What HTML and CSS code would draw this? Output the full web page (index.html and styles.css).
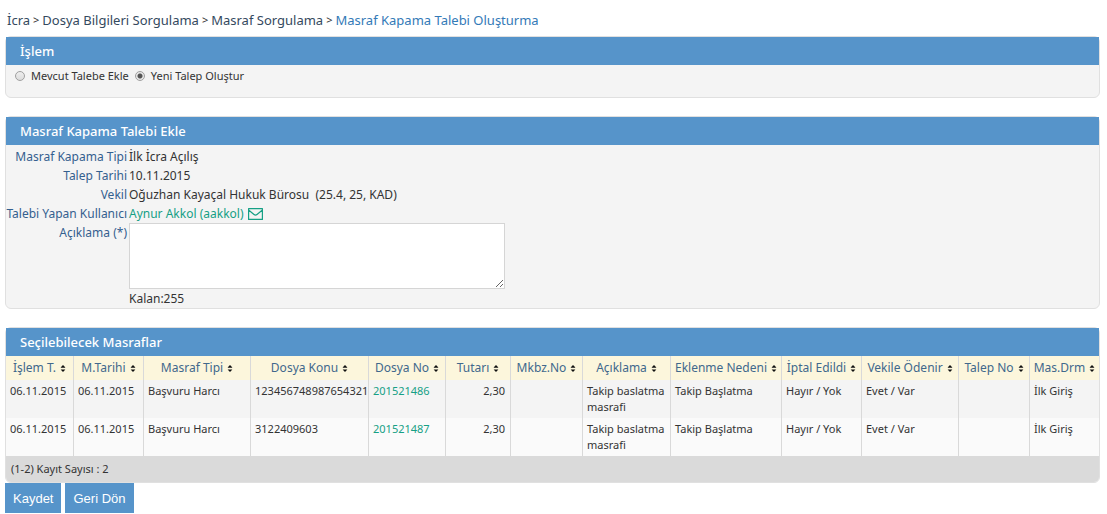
FILE: index.html
```html
<!DOCTYPE html>
<html lang="tr">
<head>
<meta charset="utf-8">
<title>Masraf Kapama Talebi Oluşturma</title>
<link rel="stylesheet" href="styles.css">
</head>
<body>
<svg class="symbols" aria-hidden="true">
  <symbol id="sort" viewBox="0 0 6 8"><path d="M3 0 5.500 2.500V3H.5v-.5zM.5 5h5v.5L3 8 .5 5.500z" fill="#111"/></symbol>
</svg>
<nav class="breadcrumb" aria-label="Konum">
  <a href="#">İcra</a><span>&gt;</span><a href="#">Dosya Bilgileri Sorgulama</a><span>&gt;</span><a href="#">Masraf Sorgulama</a><span>&gt;</span><a href="#" class="current" aria-current="page">Masraf Kapama Talebi Oluşturma</a>
</nav>
<form>
  <section class="panel">
    <h2 class="panel-title">İşlem</h2>
    <div class="choices">
      <label class="choice"><input type="radio" name="islem">Mevcut Talebe Ekle</label>
      <label class="choice"><input type="radio" name="islem" checked>Yeni Talep Oluştur</label>
    </div>
  </section>

  <section class="panel">
    <h2 class="panel-title">Masraf Kapama Talebi Ekle</h2>
    <div class="fields">
      <span class="name">Masraf Kapama Tipi</span><span>İlk İcra Açılış</span>
      <span class="name">Talep Tarihi</span><span>10.11.2015</span>
      <span class="name">Vekil</span><span>Oğuzhan Kayaçal Hukuk Bürosu&nbsp; (25.4, 25, KAD)</span>
      <span class="name">Talebi Yapan Kullanıcı</span>
      <a href="#" class="user">Aynur Akkol (aakkol)<svg class="mail" viewBox="0 0 15 12" aria-hidden="true"><path d="M.6.6h13.800v10.800H.6zM.6 2 6 6.500q1.500 1.200 3 0L14.400 2" fill="none" stroke="#16a085" stroke-width="1.200" stroke-linejoin="round"/></svg></a>
      <label class="name" for="aciklama">Açıklama (*)</label>
      <div><textarea id="aciklama" class="note"></textarea><div class="left">Kalan:255</div></div>
    </div>
  </section>

  <section class="panel">
    <h2 class="panel-title">Seçilebilecek Masraflar</h2>
    <table class="grid">
      <colgroup><col class="w68"><col class="w70"><col class="w107"><col class="w118"><col class="w77"><col class="w65"><col class="w72"><col class="w88"><col class="w111"><col class="w80"><col class="w97"><col class="w71"><col class="w69"></colgroup>
      <thead>
        <tr>
          <th>İşlem T.<svg class="sort"><use href="#sort"/></svg></th>
          <th>M.Tarihi<svg class="sort"><use href="#sort"/></svg></th>
          <th>Masraf Tipi<svg class="sort"><use href="#sort"/></svg></th>
          <th>Dosya Konu<svg class="sort"><use href="#sort"/></svg></th>
          <th>Dosya No<svg class="sort"><use href="#sort"/></svg></th>
          <th>Tutarı<svg class="sort"><use href="#sort"/></svg></th>
          <th>Mkbz.No<svg class="sort"><use href="#sort"/></svg></th>
          <th>Açıklama<svg class="sort"><use href="#sort"/></svg></th>
          <th>Eklenme Nedeni<svg class="sort"><use href="#sort"/></svg></th>
          <th>İptal Edildi<svg class="sort"><use href="#sort"/></svg></th>
          <th>Vekile Ödenir<svg class="sort"><use href="#sort"/></svg></th>
          <th>Talep No<svg class="sort"><use href="#sort"/></svg></th>
          <th>Mas.Drm<svg class="sort"><use href="#sort"/></svg></th>
        </tr>
      </thead>
      <tbody>
        <tr><td>06.11.2015</td><td>06.11.2015</td><td>Başvuru Harcı</td><td>123456748987654321</td><td><a href="#">201521486</a></td><td class="amount">2,30</td><td></td><td class="wrap">Takip baslatma masrafi</td><td>Takip Başlatma</td><td>Hayır / Yok</td><td>Evet / Var</td><td></td><td>İlk Giriş</td></tr>
        <tr><td>06.11.2015</td><td>06.11.2015</td><td>Başvuru Harcı</td><td>3122409603</td><td><a href="#">201521487</a></td><td class="amount">2,30</td><td></td><td class="wrap">Takip baslatma masrafi</td><td>Takip Başlatma</td><td>Hayır / Yok</td><td>Evet / Var</td><td></td><td>İlk Giriş</td></tr>
      </tbody>
      <tfoot><tr><td colspan="13">(1-2) Kayıt Sayısı : 2</td></tr></tfoot>
    </table>
  </section>
  <div class="actions">
    <button type="submit">Kaydet</button>
    <button type="button">Geri Dön</button>
  </div>
</form>
</body>
</html>
```
FILE: styles.css
```css
* { box-sizing: border-box; }

body {
  margin: 0;
  padding: 10px 7px 0 5px;
  background: #fff;
  color: #333;
  font: 11px/16px "Noto Sans", sans-serif;
}

a { color: #16a085; text-decoration: none; }

.symbols { display: none; }

.breadcrumb {
  display: flex;
  gap: 3px;
  height: 26px;
  padding-left: 2px;
  font-size: 13px;
  line-height: 20px;
}
.breadcrumb a { color: #34495e; }
.breadcrumb span { font-size: 11px; }
.breadcrumb .current { color: #337ab7; }

.panel {
  margin-bottom: 18px;
  border: 1px solid #e0e0e0;
  border-radius: 6px;
  background: #f4f4f4;
}
.panel-title {
  margin: 0;
  padding-left: 14px;
  background: #5694ca;
  color: #fff;
  font-size: 13px;
  font-weight: 500;
  line-height: 28px;
}

.choices {
  display: flex;
  gap: 6px;
  padding: 3px 9px 13px;
}
.choice { display: flex; align-items: center; gap: 6px; }
.choice input {
  appearance: none;
  width: 10px;
  height: 10px;
  margin: 0;
  border: 1px solid #a0a0a0;
  border-radius: 50%;
  background: linear-gradient(#eee, #dcdcdc);
}
.choice input:checked {
  background: radial-gradient(circle, #555 0 2px, #e8e8e8 3px);
}

.fields {
  display: grid;
  grid-template-columns: 121px 1fr;
  column-gap: 2px;
  padding-top: 2px;
  font-size: 12px;
  line-height: 19px;
}
.name { color: #34608f; text-align: right; white-space: nowrap; }
.user { display: flex; align-items: center; gap: 4px; }
.mail { width: 15px; height: 12px; }
.note {
  display: block;
  width: 376px;
  max-width: 100%;
  height: 66px;
  border: 1px solid #d5d5d5;
  background: #fff;
  font: inherit;
  resize: both;
}

.grid {
  width: 100%;
  table-layout: fixed;
  border-collapse: separate;
  border-spacing: 0;
}
.grid th {
  height: 24px;
  padding: 0;
  border-right: 1px solid #d9d9d9;
  background: #fcf6dc;
  color: #41688c;
  font-size: 12px;
  font-weight: 400;
  white-space: nowrap;
}
.grid td {
  height: 38px;
  padding: 3px 4px;
  border-right: 1px solid #d9d9d9;
  vertical-align: top;
  white-space: nowrap;
}
.grid th:last-child, .grid td:last-child { border-right: 0; }
.grid tbody tr:nth-child(even) { background: #fafafa; }
.grid .amount { padding-right: 5px; text-align: right; }
.grid .wrap { white-space: normal; }
.grid tfoot td {
  height: 26px;
  padding: 5px;
  border-radius: 0 0 5px 5px;
  background: #dadada;
}
.sort { width: 6px; height: 7px; margin-left: 4px; }

.w65 { width: 65px; }
.w68 { width: 68px; }
.w69 { width: 69px; }
.w70 { width: 70px; }
.w71 { width: 71px; }
.w72 { width: 72px; }
.w77 { width: 77px; }
.w80 { width: 80px; }
.w88 { width: 88px; }
.w97 { width: 97px; }
.w107 { width: 107px; }
.w111 { width: 111px; }
.w118 { width: 118px; }

.panel:has(.grid) { margin-bottom: 0; }

.actions { display: flex; gap: 4px; }
.actions button {
  height: 30px;
  padding: 0 8px;
  border: 0;
  background: #5694ca;
  color: #fff;
  font: 13px "Liberation Sans", Arial, sans-serif;
}
```
